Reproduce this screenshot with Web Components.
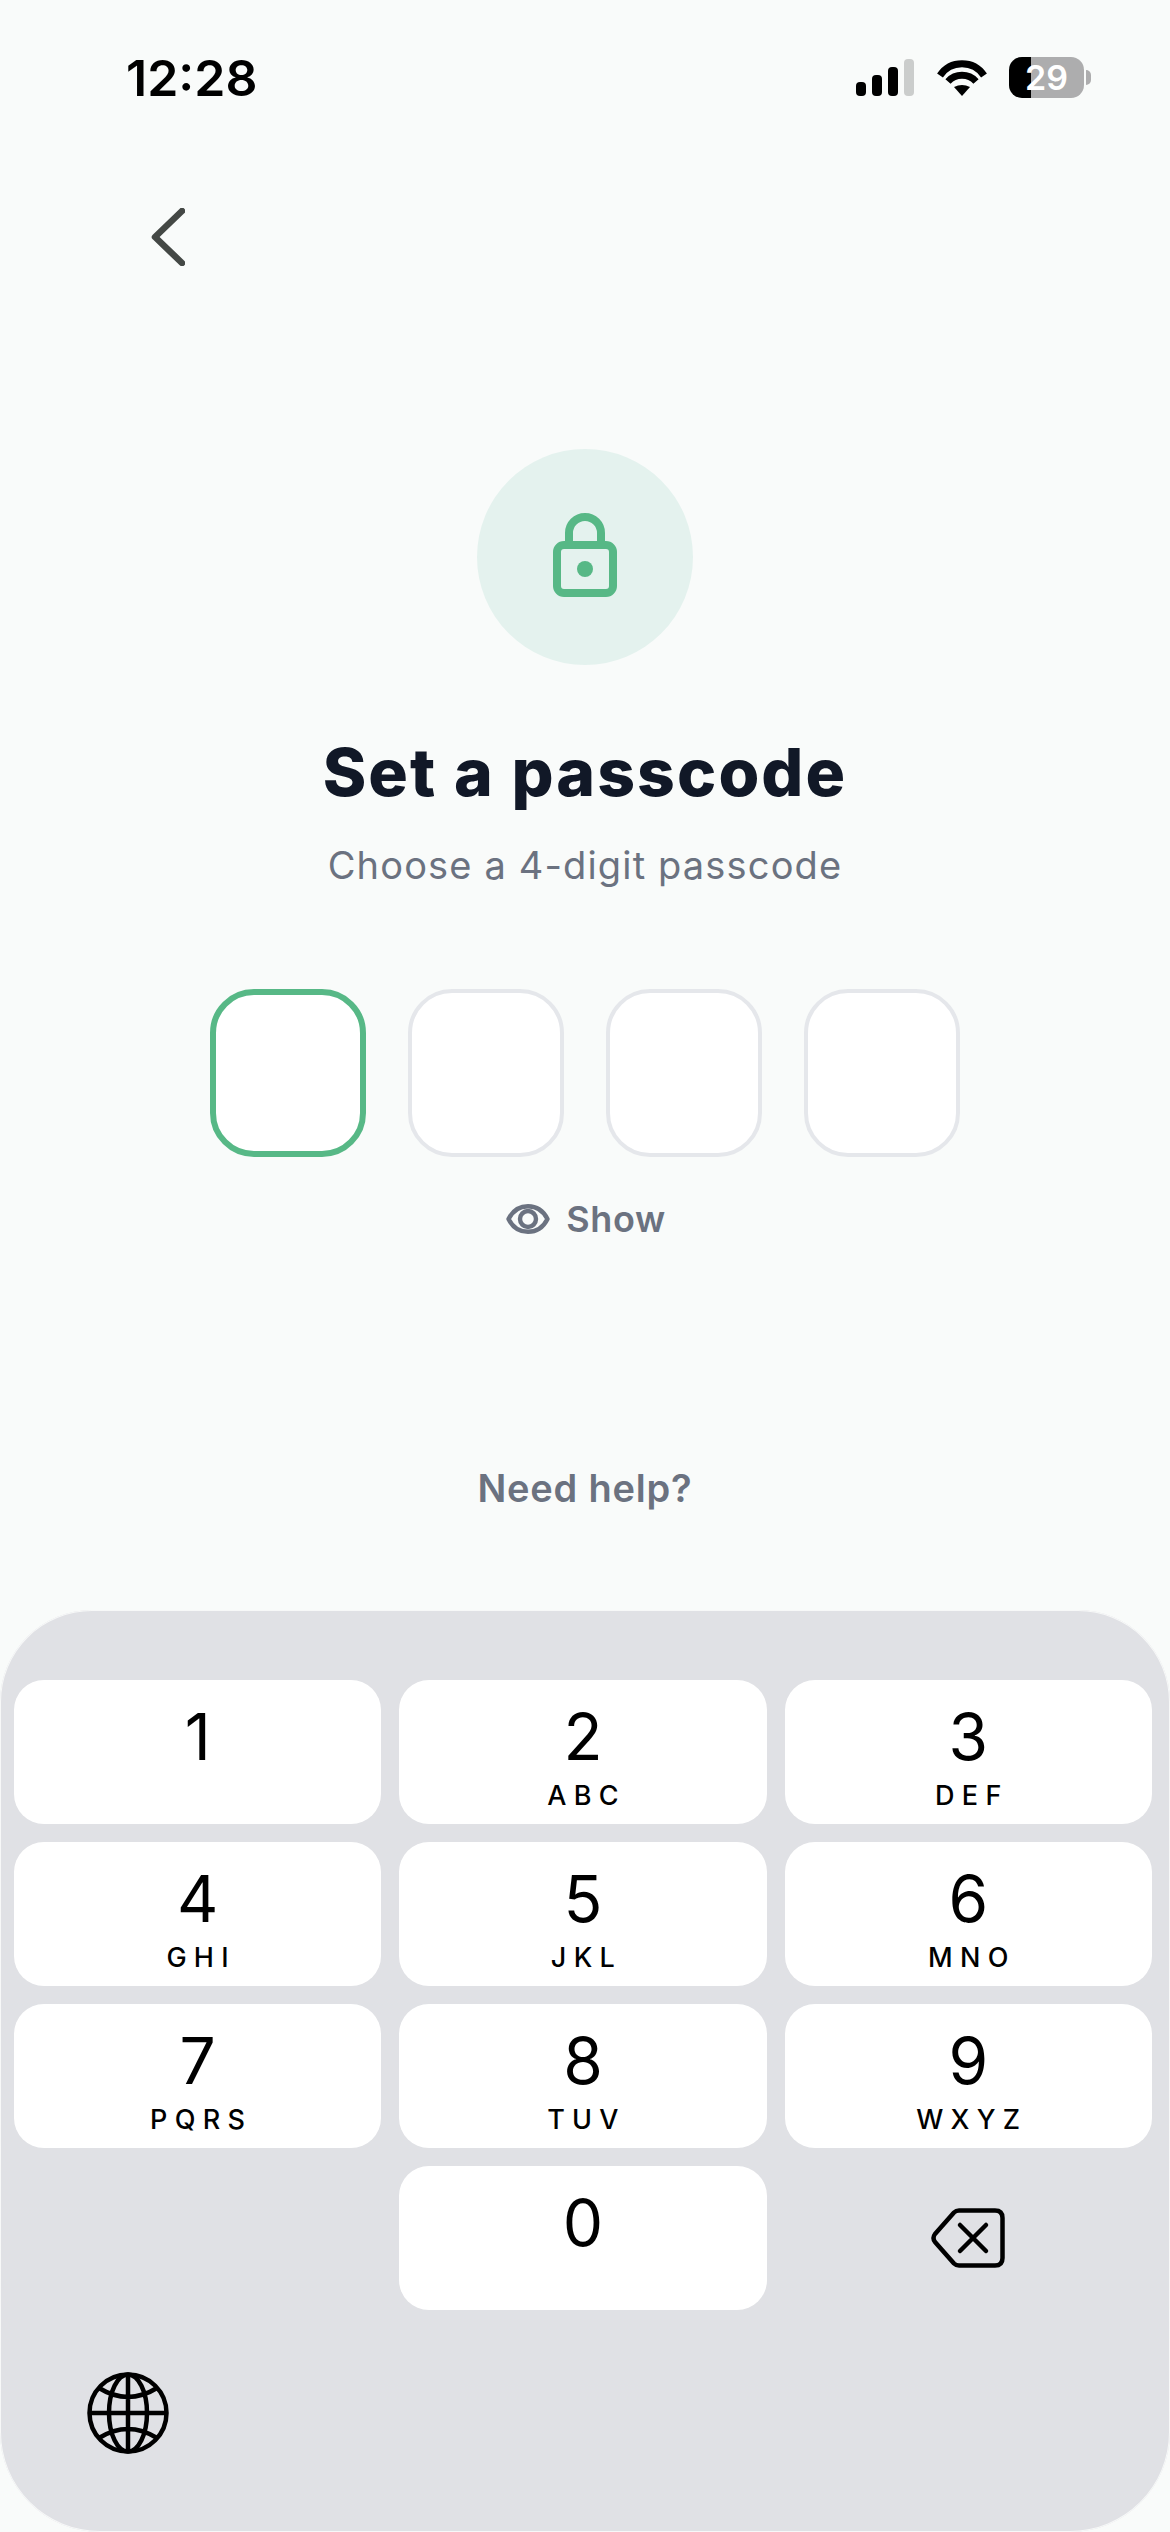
<!DOCTYPE html>
<html lang="en"><head><meta charset="utf-8"><title>Set a passcode</title>
<style>
html,body{margin:0;padding:0;background:#f9fbfa;}
body{width:1170px;height:2532px;overflow:hidden;font-family:Inter,"Liberation Sans",sans-serif;}
</style></head><body>
<x-screen>
  <x-status-bar time="12:28" battery="29"></x-status-bar>
  <x-back></x-back>
  <x-hero>
    <span slot="title">Set a passcode</span>
    <span slot="sub">Choose a 4-digit passcode</span>
  </x-hero>
  <x-code-row>
    <x-code-box active></x-code-box><x-code-box></x-code-box><x-code-box></x-code-box><x-code-box></x-code-box>
  </x-code-row>
  <x-show>Show</x-show>
  <x-help>Need help?</x-help>
  <x-keyboard>
    <x-key>1</x-key><x-key letters="ABC">2</x-key><x-key letters="DEF">3</x-key>
    <x-key letters="GHI">4</x-key><x-key letters="JKL">5</x-key><x-key letters="MNO">6</x-key>
    <x-key letters="PQRS">7</x-key><x-key letters="TUV">8</x-key><x-key letters="WXYZ">9</x-key>
    <x-blank></x-blank><x-key>0</x-key><x-delete></x-delete>
  </x-keyboard>
</x-screen>
<script>
function def(name, html){
  customElements.define(name, class extends HTMLElement{
    constructor(){super();this.attachShadow({mode:'open'});}
    connectedCallback(){this.shadowRoot.innerHTML=typeof html==='function'?html(this):html;}
  });
}
def('x-screen',`<style>:host{display:flex;flex-direction:column;width:1170px;height:2532px;background:#f9fbfa;color:#111827}</style><slot></slot>`);
def('x-status-bar',el=>`<style>
:host{display:flex;align-items:flex-start;justify-content:space-between;padding:57px 86px 0 126px;box-sizing:border-box;height:155px;width:1170px}
.time{font:600 50px/42px Inter,sans-serif;color:#000}
.right{display:flex;align-items:flex-start}
.sig{display:flex;gap:6px;align-items:flex-end;height:37px;margin-top:2px}
.sig i{display:block;width:10px;background:#000;border-radius:4px}
.wifi{display:block;margin:2px 22px 0 23px}
.bat{position:relative;width:75px;height:41px;border-radius:13px;background:linear-gradient(90deg,#000 22px,#adadae 22px);color:#fff;font:600 34px/42px Inter,sans-serif;text-align:center}
.bat:after{content:"";position:absolute;left:77px;top:13px;width:5px;height:15px;border-radius:0 8px 8px 0;background:#adadae}
</style>
<div class="time">${el.getAttribute('time')}</div>
<div class="right">
<div class="sig"><i style="height:14px"></i><i style="height:21px"></i><i style="height:29px"></i><i style="height:37px;background:#cbcdcc"></i></div>
<svg class="wifi" width="50" height="37" viewBox="0 0 50 37" fill="none"><path d="M3 16.500A26.500 26.500 0 0 1 47 16.500" stroke="#000" stroke-width="7"/><path d="M11 22.500A19 19 0 0 1 39 22.500" stroke="#000" stroke-width="7"/><path d="M25 37L17 28Q25 24 33 28Z" fill="#000"/></svg>
<div class="bat">${el.getAttribute('battery')}</div>
</div>`);
def('x-back',`<style>:host{display:block;height:58px;padding:53px 0 0 151px}svg{display:block}</style>
<svg width="34" height="58" viewBox="0 0 34 58" fill="none"><path d="M31 3L4 29L31 55" stroke="#444845" stroke-width="6.500" stroke-linecap="round" stroke-linejoin="round"/></svg>`);
def('x-hero',`<style>
:host{display:flex;flex-direction:column;align-items:center;padding-top:183px}
.c{width:216px;height:216px;border-radius:50%;background:#e4f2ee;display:flex;align-items:center;justify-content:center}
svg{display:block;margin-bottom:4px}
.t{margin-top:68px;font:800 66px/78px Inter,sans-serif;color:#111827;letter-spacing:2.1px}
.s{margin-top:30px;font:400 38px/48px Inter,sans-serif;color:#6b7280;letter-spacing:1.15px}
</style>
<div class="c"><svg width="64" height="84" viewBox="0 0 64 84" fill="none"><path d="M16 32V20a16 16 0 0 1 32 0V32" stroke="#57b886" stroke-width="8"/><rect x="4" y="32" width="56" height="48" rx="7" stroke="#57b886" stroke-width="8"/><circle cx="32" cy="56" r="8" fill="#57b886"/></svg></div>
<div class="t"><slot name="title"></slot></div>
<div class="s"><slot name="sub"></slot></div>`);
def('x-code-row',`<style>:host{display:flex;justify-content:center;gap:42px;margin-top:100px}</style><slot></slot>`);
def('x-code-box',el=>`<style>:host{display:block;width:156px;height:168px;box-sizing:border-box;background:#fff;border-radius:44px;border:${el.hasAttribute('active')?'6px solid #57b886':'4px solid #e5e7eb'}}</style>`);
def('x-show',`<style>:host{display:flex;justify-content:center;align-items:center;gap:16px;margin-top:40px;height:44px;font:600 36px/44px Inter,sans-serif;color:#6b7280;letter-spacing:.6px;padding-left:2px}svg{display:block}</style>
<svg width="44" height="30" viewBox="0 0 44 30" fill="none"><path d="M2.500 15C7 6 14 2.200 22 2.200S37 6 41.500 15C37 24 30 27.800 22 27.800S7 24 2.500 15Z" stroke="#6b7280" stroke-width="4.400" stroke-linejoin="round"/><circle cx="22" cy="15" r="8" stroke="#6b7280" stroke-width="4.400"/></svg><slot></slot>`);
def('x-help',`<style>:host{display:block;margin-top:224px;height:46px;text-align:center;font:600 38px/46px Inter,sans-serif;color:#6b7280;letter-spacing:.8px}</style><slot></slot>`);
def('x-keyboard',`<style>
:host{display:block;margin-top:auto;height:922px;box-sizing:border-box;background:#e0e1e5;border-radius:92px 92px 100px 100px;padding:70px 18px 0 14px;box-shadow:inset 0 0 0 1px #f7f8f8}
.g{display:grid;grid-template-columns:repeat(3,1fr);grid-auto-rows:144px;gap:18px}
.globe{display:block;margin:62px 0 0 73px}
</style>
<div class="g"><slot></slot></div>
<svg class="globe" width="82" height="82" viewBox="0 0 82 82" fill="none" stroke="#000" stroke-width="4.500"><circle cx="41" cy="41" r="38.500"/><ellipse cx="41" cy="41" rx="19" ry="38.500"/><path d="M41 2.500V79.500M2.500 41H79.500M12 16Q41 34 70 16M12 66Q41 48 70 66"/></svg>`);
def('x-key',el=>`<style>
:host{display:flex;flex-direction:column;align-items:center;background:#fff;border-radius:30px;color:#000;height:144px}
.d{font:400 64px/70px Inter,sans-serif;margin-top:22px;height:70px}
.l{font:500 27px/30px Inter,sans-serif;letter-spacing:7.300px;margin-top:9px;padding-left:7px}
</style><div class="d"><slot></slot></div><div class="l">${el.getAttribute('letters')||''}</div>`);
def('x-blank',`<style>:host{display:block}</style>`);
def('x-delete',`<style>:host{display:flex;align-items:center;justify-content:center}svg{display:block}</style>
<svg width="74" height="60" viewBox="0 0 74 60" fill="none" stroke="#000" stroke-width="4.500" stroke-linecap="round" stroke-linejoin="round"><path d="M28 2.500H64Q71.500 2.500 71.500 10V50Q71.500 57.500 64 57.500H28Q25 57.500 23 55.500L4 34Q1 30 4 26L23 4.500Q25 2.500 28 2.500Z"/><path d="M29 17L55 43M55 17L29 43"/></svg>`);
</script>
</body></html>
